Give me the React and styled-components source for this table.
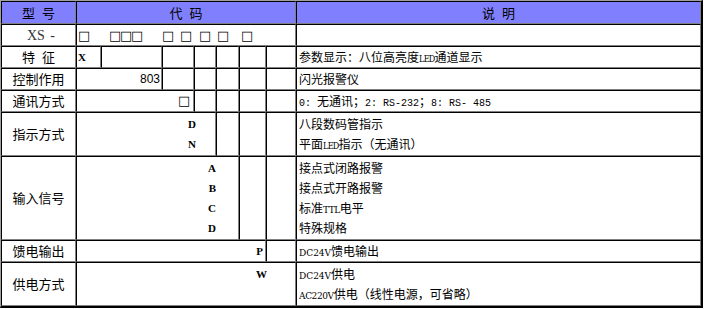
import styled, { createGlobalStyle, css } from "styled-components";

const GlobalStyle = createGlobalStyle`
  body {
    margin: 0;
    background: #fff;
  }
`;

const Table = styled.table`
  width: 703px;
  table-layout: fixed;
  border-collapse: separate;
  border-spacing: 0;
  border-style: solid;
  border-width: 1px 2px 2px 1px;
  border-color: #a0a0a0 #000 #000 #a0a0a0;
  font-family: "Noto Sans CJK SC", sans-serif;
  color: #000;
`;

const Col = styled.col`
  width: ${(p) => p.$w}px;
`;

const Row = styled.tr`
  height: ${(p) => p.$h}px;
`;

const cellBorder = css`
  border-style: solid;
  border-width: 1px;
  border-color: #000 #808080 #808080 #000;
  padding: 0;
  box-sizing: border-box;
  line-height: 20px;
`;

const HeadCell = styled.th`
  ${cellBorder};
  background: #8080ff;
  font-weight: normal;
  font-size: 13px;
  text-align: center;
  vertical-align: middle;
  word-spacing: 4px;
`;

const LabelCell = styled.td`
  ${cellBorder};
  font-size: 13px;
  text-align: center;
  vertical-align: middle;
  padding-left: ${(p) => p.$pl || 0}px;
  word-spacing: 4px;
`;

const ModelText = styled.span`
  font-family: "Liberation Serif", serif;
  font-size: 14px;
  line-height: 1;
  color: #333;
  word-spacing: 2px;
`;

const CodeCell = styled.td`
  ${cellBorder};
  text-align: ${(p) => p.$align || "right"};
  padding-right: ${(p) => p.$pr || 0}px;
  padding-left: ${(p) => p.$pl || 0}px;
  padding-top: ${(p) => p.$pt || 0}px;
  vertical-align: ${(p) => (p.$pt ? "top" : "middle")};
  font-family: "Liberation Serif", serif;
  font-weight: bold;
  font-size: 11px;
`;

const Number = styled.span`
  font-family: "Liberation Sans", sans-serif;
  font-weight: normal;
  font-size: 12px;
  line-height: 1;
`;

const BoxRow = styled.div`
  display: flex;
  align-items: center;
  height: 20px;
`;

const Box = styled.span`
  display: inline-block;
  width: 11px;
  font-family: "DejaVu Sans", sans-serif;
  font-weight: normal;
  font-size: 13px;
  line-height: 1;
  text-align: left;
  margin-left: ${(p) => p.$ml || 0}px;
`;

const DescCell = styled.td`
  ${cellBorder};
  padding-left: 2px;
  padding-top: ${(p) => p.$pt || 0}px;
  vertical-align: ${(p) => (p.$pt ? "top" : "middle")};
  font-size: 12px;
  white-space: nowrap;
`;

const Line = styled.div`
  height: 20px;
  overflow: hidden;
`;

const Mono = styled.span`
  font-family: "Liberation Mono", monospace;
  font-size: 10px;
  line-height: 1;
`;

const Tag = styled.span`
  font-family: "DejaVu Serif", serif;
  font-stretch: condensed;
  font-size: ${(p) => p.$size || 10}px;
  letter-spacing: ${(p) => p.$ls || 0}px;
  line-height: 1;
`;

const boxGaps = [1, 20, 0, 0, 20, 7, 8, 7, 13];

function App() {
  return (
    <>
      <GlobalStyle />
      <Table>
        <colgroup>
          <Col $w={75} />
          <Col $w={25} />
          <Col $w={61} />
          <Col $w={32} />
          <Col $w={22} />
          <Col $w={23} />
          <Col $w={27} />
          <Col $w={30} />
          <Col $w={405} />
        </colgroup>
        <thead>
          <Row $h={23}>
            <HeadCell>型 号</HeadCell>
            <HeadCell colSpan={7}>代 码</HeadCell>
            <HeadCell>说 明</HeadCell>
          </Row>
        </thead>
        <tbody>
          <Row $h={22}>
            <LabelCell $pl={5}>
              <ModelText>XS -</ModelText>
            </LabelCell>
            <CodeCell colSpan={7} $align="left">
              <BoxRow>
                {boxGaps.map((gap, i) => (
                  <Box key={i} $ml={gap}>
                    □
                  </Box>
                ))}
              </BoxRow>
            </CodeCell>
            <DescCell />
          </Row>
          <Row $h={22}>
            <LabelCell>特 征</LabelCell>
            <CodeCell $align="left" $pl={1}>
              X
            </CodeCell>
            <CodeCell />
            <CodeCell />
            <CodeCell />
            <CodeCell />
            <CodeCell />
            <CodeCell />
            <DescCell>
              参数显示：八位高亮度<Tag $size={9} $ls={-0.8}>LED</Tag>通道显示
            </DescCell>
          </Row>
          <Row $h={22}>
            <LabelCell>控制作用</LabelCell>
            <CodeCell colSpan={2} $pr={1}>
              <Number>803</Number>
            </CodeCell>
            <CodeCell />
            <CodeCell />
            <CodeCell />
            <CodeCell />
            <CodeCell />
            <DescCell>闪光报警仪</DescCell>
          </Row>
          <Row $h={22}>
            <LabelCell>通讯方式</LabelCell>
            <CodeCell colSpan={3} $pr={4}>
              <Box>□</Box>
            </CodeCell>
            <CodeCell />
            <CodeCell />
            <CodeCell />
            <CodeCell />
            <DescCell>
              <Mono>0: </Mono>无通讯；<Mono>2: RS-232</Mono>；<Mono>8: RS- 485</Mono>
            </DescCell>
          </Row>
          <Row $h={44}>
            <LabelCell>指示方式</LabelCell>
            <CodeCell colSpan={4} $pr={19} $pt={1}>
              <Line>D</Line>
              <Line>N</Line>
            </CodeCell>
            <CodeCell />
            <CodeCell />
            <CodeCell />
            <DescCell $pt={1}>
              <Line>八段数码管指示</Line>
              <Line>
                平面<Tag $size={9} $ls={-0.8}>LED</Tag>指示（无通讯）
              </Line>
            </DescCell>
          </Row>
          <Row $h={84}>
            <LabelCell>输入信号</LabelCell>
            <CodeCell colSpan={5} $pr={22} $pt={1}>
              <Line>A</Line>
              <Line>B</Line>
              <Line>C</Line>
              <Line>D</Line>
            </CodeCell>
            <CodeCell />
            <CodeCell />
            <DescCell $pt={1}>
              <Line>接点式闭路报警</Line>
              <Line>接点式开路报警</Line>
              <Line>
                标准<Tag $size={10} $ls={-0.5}>TTL</Tag>电平
              </Line>
              <Line>特殊规格</Line>
            </DescCell>
          </Row>
          <Row $h={22}>
            <LabelCell>馈电输出</LabelCell>
            <CodeCell colSpan={6} $pr={2}>
              P
            </CodeCell>
            <CodeCell />
            <DescCell>
              <Tag>DC24V</Tag>馈电输出
            </DescCell>
          </Row>
          <Row $h={44}>
            <LabelCell>供电方式</LabelCell>
            <CodeCell colSpan={7} $pr={28} $pt={1}>
              <Line>W</Line>
            </CodeCell>
            <DescCell $pt={1}>
              <Line>
                <Tag>DC24V</Tag>供电
              </Line>
              <Line>
                <Tag $ls={-0.4}>AC220V</Tag>供电（线性电源，可省略）
              </Line>
            </DescCell>
          </Row>
        </tbody>
      </Table>
    </>
  );
}

export default App;
